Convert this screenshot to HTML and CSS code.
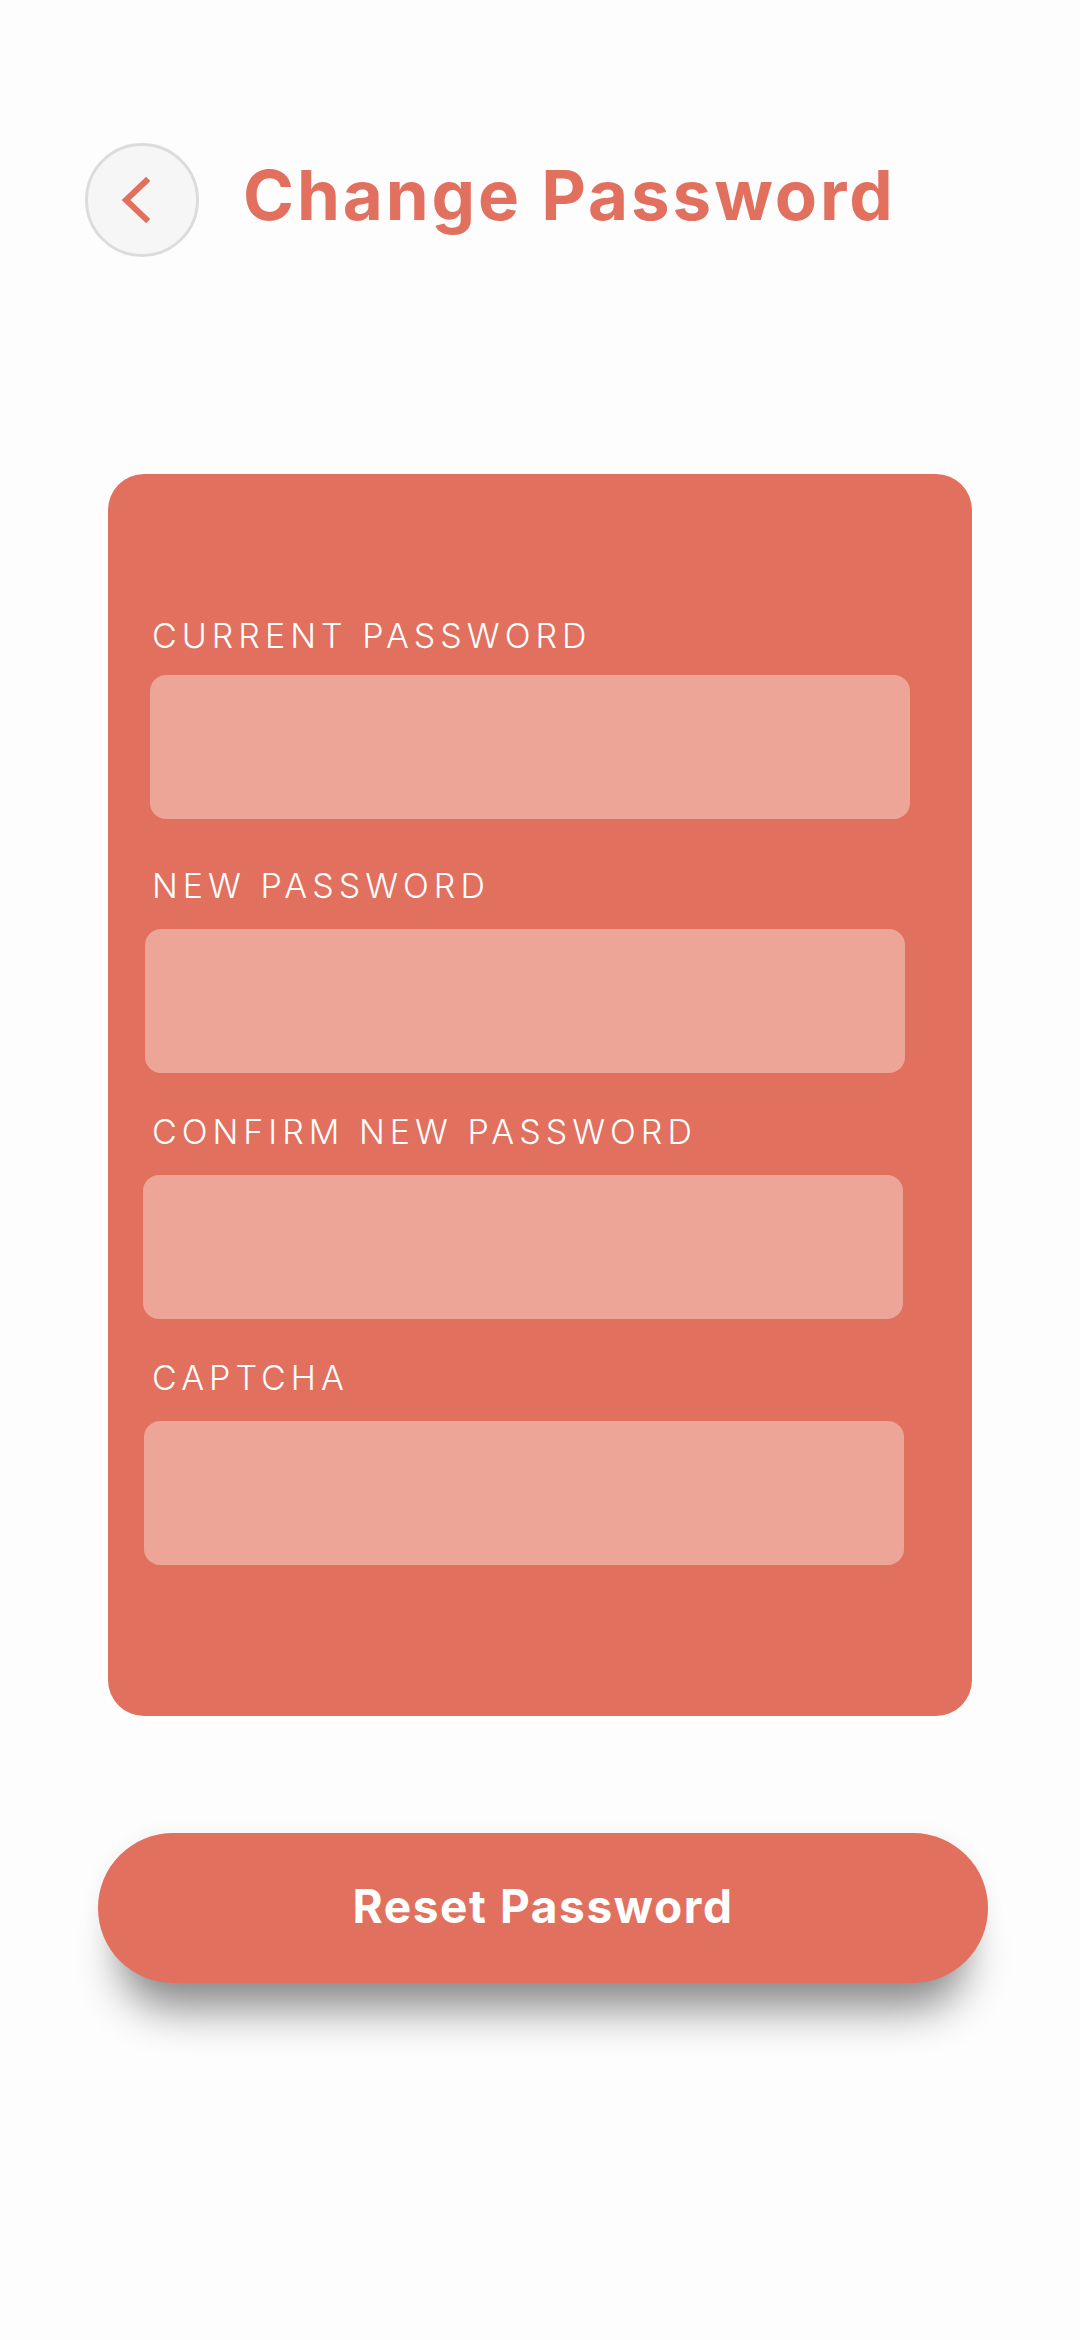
FILE: index.html
```html
<!DOCTYPE html>
<html lang="en">
<head>
<meta charset="utf-8">
<title>Change Password</title>
<link rel="stylesheet" href="styles.css">
</head>
<body>
<div class="screen">
  <header class="header">
    <button class="back" aria-label="Back">
      <svg width="36" height="50" viewBox="0 0 36 50">
        <path d="M27 6 L7 25 L27 44" fill="none" stroke="#e2705e" stroke-width="6" stroke-linecap="square" stroke-linejoin="miter"/>
      </svg>
    </button>
    <h1 class="title">Change Password</h1>
  </header>

  <form class="card">
    <div class="field field--first">
      <label class="label label--first">CURRENT PASSWORD</label>
      <div class="input input--a"></div>
    </div>
    <div class="field">
      <label class="label">NEW PASSWORD</label>
      <div class="input input--b"></div>
    </div>
    <div class="field">
      <label class="label">CONFIRM NEW PASSWORD</label>
      <div class="input input--c"></div>
    </div>
    <div class="field">
      <label class="label">CAPTCHA</label>
      <div class="input input--d"></div>
    </div>
  </form>

  <button class="reset">Reset Password</button>
</div>
</body>
</html>
```
FILE: styles.css
```css
* { box-sizing: border-box; }
html, body { margin: 0; padding: 0; }
body {
  background: #fdfdfd;
  width: 1080px;
  height: 2340px;
  font-family: Inter, "Noto Sans", sans-serif;
}
.screen {
  display: flex;
  flex-direction: column;
}
.header {
  display: flex;
  align-items: center;
  padding: 143px 0 0 85px;
  gap: 44px;
}
.back {
  width: 114px;
  height: 114px;
  border-radius: 50%;
  border: 3px solid #dcdcdc;
  background: #f6f6f6;
  display: flex;
  align-items: center;
  justify-content: center;
  padding: 0 10px 0 0;
  margin: 0;
}
.back svg { display: block; }
.title {
  margin: 0 0 10px 0;
  font-size: 69px;
  line-height: 1;
  font-weight: 700;
  color: #e2705e;
  letter-spacing: 2.9px;
}
.card {
  margin: 217px 0 0 108px;
  width: 864px;
  background: #e2705e;
  border-radius: 36px;
  padding: 145px 44px 151px 44px;
  display: flex;
  flex-direction: column;
  gap: 42px;
}
.field {
  display: flex;
  flex-direction: column;
}
.field--first { margin-bottom: 8px; }
.label {
  font-size: 34px;
  line-height: 34px;
  font-weight: 300;
  color: #ffffff;
  letter-spacing: 5px;
  margin-bottom: 26px;
}
.label--first { margin-bottom: 22px; }
.input {
  height: 144px;
  width: 760px;
  background: #eca597;
  border-radius: 16px;
}
.input--a { margin-left: -2px; }
.input--b { margin-left: -7px; }
.input--c { margin-left: -9px; }
.input--d { margin-left: -8px; }
.reset {
  margin: 117px 0 0 98px;
  width: 890px;
  height: 150px;
  border: none;
  border-radius: 75px;
  background: #e2705e;
  color: #ffffff;
  font-family: Inter, "Noto Sans", sans-serif;
  font-size: 46px;
  font-weight: 700;
  letter-spacing: 1.6px;
  padding: 0 0 4px 0;
  box-shadow: 0 48px 44px -22px rgba(0,0,0,0.45), 0 0 20px rgba(0,0,0,0.05);
}
```
